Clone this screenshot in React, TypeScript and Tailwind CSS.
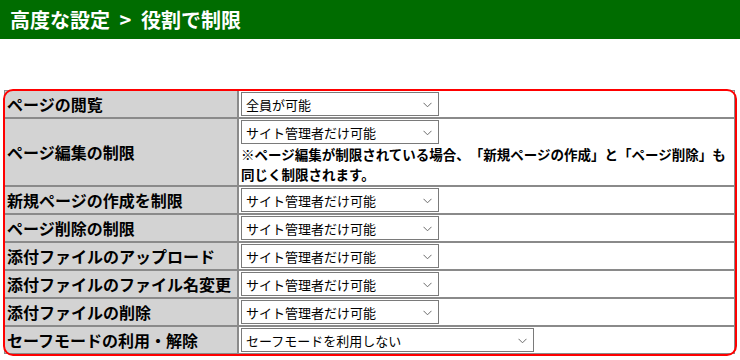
import React from "react";

type Row = {
  label: string;
  value: string;
  wide?: boolean;
  note?: string;
};

const rows: Row[] = [
  { label: "ページの閲覧", value: "全員が可能" },
  {
    label: "ページ編集の制限",
    value: "サイト管理者だけ可能",
    note: "※ページ編集が制限されている場合、「新規ページの作成」と「ページ削除」も同じく制限されます。",
  },
  { label: "新規ページの作成を制限", value: "サイト管理者だけ可能" },
  { label: "ページ削除の制限", value: "サイト管理者だけ可能" },
  { label: "添付ファイルのアップロード", value: "サイト管理者だけ可能" },
  { label: "添付ファイルのファイル名変更", value: "サイト管理者だけ可能" },
  { label: "添付ファイルの削除", value: "サイト管理者だけ可能" },
  { label: "セーフモードの利用・解除", value: "セーフモードを利用しない", wide: true },
];

const Select = ({ value, wide }: { value: string; wide?: boolean }) => (
  <div
    className={`relative flex items-center h-[24px] border border-[#7a7a7a] bg-white pl-[4px] text-[13px] text-black ${
      wide ? "w-[293px]" : "w-[198px]"
    }`}
  >
    <span className="leading-none">{value}</span>
    {/* chevron */}
    <svg
      className="absolute right-[6px] top-[9px]"
      width="9"
      height="6"
      viewBox="0 0 9 6"
      fill="none"
    >
      <path d="M0.5 0.8 L4.5 4.8 L8.5 0.8" stroke="#6b6b6b" strokeWidth="1" />
    </svg>
  </div>
);

export default function App() {
  return (
    <div className="w-[740px] h-[360px] bg-white overflow-hidden font-['Noto_Sans_CJK_JP','Noto_Sans',sans-serif] text-black [text-spacing-trim:space-all]">
      <div className="h-[39px] bg-[#006c00] text-white font-bold text-[20px] pl-[10px] flex items-center whitespace-pre">
        高度な設定 <span className="px-[5px]">&gt;</span> 役割で制限
      </div>

      <div className="relative mt-[51px] ml-[4px] w-[731px]">
        <table className="w-full table-fixed border-separate border-spacing-0">
          <colgroup>
            <col className="w-[234px]" />
            <col />
          </colgroup>
          <tbody>
            {rows.map((r, i) => (
              <tr key={i}>
                <td className="bg-[#d3d3d3] border border-[#8a8a8a] px-[2px] align-middle font-bold text-[16px] leading-[26px] whitespace-nowrap">
                  {r.label}
                </td>
                <td className="border border-[#8a8a8a] px-[2px] py-[1px] align-top">
                  <Select value={r.value} wide={r.wide} />
                  {r.note && (
                    <div className="font-bold text-[13.5px] leading-[20px]">
                      {r.note}
                    </div>
                  )}
                </td>
              </tr>
            ))}
          </tbody>
        </table>
        {/* red highlight frame */}
        <div className="pointer-events-none absolute -left-[1px] -top-[1px] -right-[2px] -bottom-[2px] border-2 border-[#ff0000] rounded-[10px]" />
      </div>
    </div>
  );
}
